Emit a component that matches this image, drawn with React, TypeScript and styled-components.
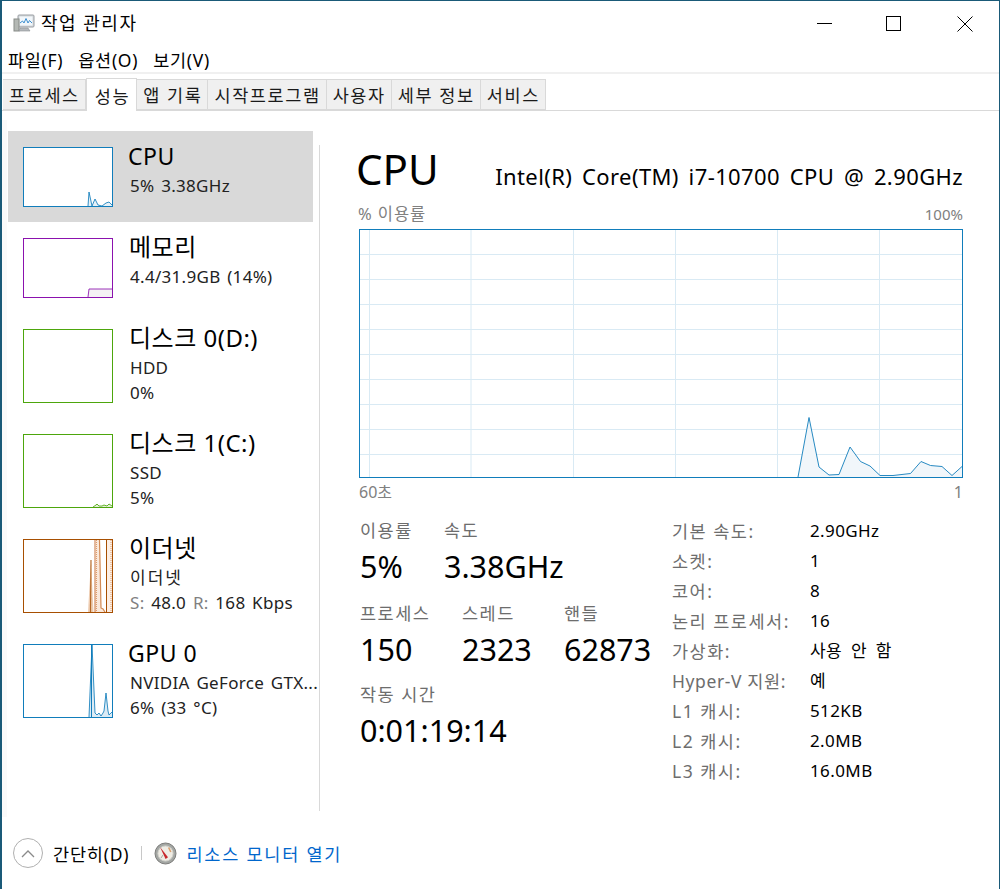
import React from 'react';
import styled, { createGlobalStyle } from 'styled-components';

const GlobalStyle = createGlobalStyle`
  html, body {
    margin: 0;
    padding: 0;
    background: #fff;
  }
  * {
    box-sizing: border-box;
  }
  body {
    font-family: "Noto Sans", "Noto Sans CJK KR", sans-serif;
    color: #000;
  }
`;

const Window = styled.div`
  width: 1000px;
  height: 889px;
  display: flex;
  flex-direction: column;
  border-top: 1px solid #1a5a78;
  border-left: 2px solid #1a5a78;
  border-right: 1px solid #1a5a78;
  overflow: hidden;
  background: #fff;
`;

const TitleBar = styled.div`
  height: 45px;
  flex: none;
  display: flex;
  align-items: center;
  padding-left: 11px;
`;

const TitleText = styled.div`
  margin-left: 6px;
  font-size: 18px;
  letter-spacing: 1.5px;
  line-height: 45px;
`;

const WindowButtons = styled.div`
  margin-left: auto;
  display: flex;
`;

const WindowButton = styled.div<{ $width: number }>`
  width: ${(p) => p.$width}px;
  height: 45px;
  display: flex;
  align-items: center;
  justify-content: center;
`;

const MenuBar = styled.div`
  height: 28px;
  flex: none;
  display: flex;
  gap: 15px;
  padding: 3px 0 0 6px;
  border-bottom: 2px solid #f0f0f0;
  align-items: center;
`;

const MenuItem = styled.div`
  font-size: 17.5px;
  line-height: 23px;
  letter-spacing: 0.7px;
`;

const TabBar = styled.div`
  height: 37px;
  flex: none;
  display: flex;
  align-items: flex-end;
  padding-left: 1px;
  border-bottom: 1px solid #d9d9d9;
`;

const Tab = styled.div<{ $active?: boolean }>`
  height: ${(p) => (p.$active ? '33px' : '31px')};
  margin-bottom: ${(p) => (p.$active ? '-1px' : '0')};
  padding: ${(p) => (p.$active ? '0 6px 0 8px' : '0 5px 0 6px')};
  display: flex;
  align-items: center;
  font-size: 17.5px;
  letter-spacing: 1.6px;
  white-space: nowrap;
  color: #1a1a1a;
  background: ${(p) => (p.$active ? '#fff' : '#f0f0f0')};
  border: 1px solid #d9d9d9;
  border-bottom: ${(p) => (p.$active ? 'none' : '1px solid #d9d9d9')};
  border-left: ${(p) => (p.$active ? '1px solid #d9d9d9' : 'none')};
`;

const Main = styled.div`
  flex: 1;
  display: flex;
  min-height: 0;
  padding-top: 9px;
`;

const Sidebar = styled.div`
  width: 317px;
  flex: none;
  padding-top: 11px;
  border-left: 5px solid #fafafa;
  padding-left: 1px;
  display: flex;
  flex-direction: column;
`;

const SideItem = styled.div<{ $selected?: boolean; $height: number }>`
  height: ${(p) => p.$height}px;
  flex: none;
  padding: 16px 0 0 15px;
  display: flex;
  gap: 16px;
  background: ${(p) => (p.$selected ? '#d9d9d9' : 'transparent')};
  width: 305px;
`;

const Thumb = styled.div<{ $color: string; $height: number }>`
  width: 90px;
  height: ${(p) => p.$height}px;
  flex: none;
  border: 1px solid ${(p) => p.$color};
  background: #fff;
  svg {
    display: block;
  }
`;

const ItemText = styled.div`
  display: flex;
  flex-direction: column;
  white-space: nowrap;
`;

const ItemTitle = styled.div<{ $latin?: boolean }>`
  font-size: ${(p) => (p.$latin ? '23px' : '24px')};
  line-height: 30px;
  margin: -6px 0 2px ${(p) => (p.$latin ? '-1px' : '0')};
  letter-spacing: ${(p) => (p.$latin ? '0.5px' : '0.5px')};
`;

const ItemLine = styled.div<{ $ko?: boolean }>`
  font-size: 17px;
  line-height: 25px;
  letter-spacing: ${(p) => (p.$ko ? '2px' : '0.3px')};
  word-spacing: 2px;
  margin-left: 1px;
  color: #222;
`;

const Muted = styled.span`
  color: #808080;
`;

const Divider = styled.div`
  width: 1px;
  flex: none;
  background: #d9d9d9;
  margin-top: 25px;
  height: 666px;
`;

const Content = styled.div`
  flex: 1;
  padding: 11px 36px 0 37px;
  display: flex;
  flex-direction: column;
`;

const Heading = styled.div`
  display: flex;
  align-items: baseline;
  justify-content: space-between;
  height: 61px;
`;

const BigTitle = styled.div`
  font-size: 42px;
  line-height: 56px;
  margin: 10px 0 0 -1px;
`;

const CpuName = styled.div`
  font-size: 22px;
  letter-spacing: 0.4px;
  word-spacing: 3.6px;
`;

const ChartCaption = styled.div`
  display: flex;
  justify-content: space-between;
  color: #808080;
  font-size: 15px;
  line-height: 22px;
  height: 26px;
  margin: 11px 0 0 0;
`;

const CaptionKo = styled.span`
  font-size: 16.5px;
  letter-spacing: 0.9px;
  margin-left: 1px;
`;

const ChartBox = styled.div`
  width: 604px;
  height: 249px;
  flex: none;
  margin-left: 2px;
  border: 1px solid #117dbb;
  svg {
    display: block;
  }
`;

const ChartFooter = styled.div`
  display: flex;
  justify-content: space-between;
  color: #808080;
  font-size: 16px;
  line-height: 22px;
  margin: 3px 0 0 2px;
  width: 604px;
`;

const Stats = styled.div`
  display: flex;
  margin: 15px 0 0 3px;
`;

const LeftStats = styled.div`
  width: 312px;
  flex: none;
  display: flex;
  flex-direction: column;
`;

const StatRow = styled.div<{ $bottom: number }>`
  display: flex;
  margin-bottom: ${(p) => p.$bottom}px;
`;

const Stat = styled.div<{ $width: number }>`
  width: ${(p) => p.$width}px;
  flex: none;
  white-space: nowrap;
`;

const StatLabel = styled.div`
  font-size: 17.5px;
  letter-spacing: 1.5px;
  line-height: 24px;
  color: #6d6d6d;
`;

const StatValue = styled.div`
  font-size: 30.5px;
  line-height: 42px;
  margin-top: 3px;
`;

const Specs = styled.div`
  display: grid;
  grid-template-columns: 138px 1fr;
  grid-auto-rows: 30px;
  margin-top: -2px;
  line-height: 30px;
  white-space: nowrap;
`;

const SpecLabel = styled.div<{ $latin?: boolean }>`
  color: #6d6d6d;
  font-size: 17.5px;
  letter-spacing: ${(p) => (p.$latin ? '0.6px' : '1.5px')};
`;

const SpecValue = styled.div`
  font-size: 17px;
  letter-spacing: 0.4px;
  word-spacing: 4px;
`;

const Footer = styled.div`
  height: 72px;
  flex: none;
  display: flex;
  align-items: center;
  padding: 0 0 0 11px;
`;

const CollapseButton = styled.div`
  width: 30px;
  height: 30px;
  border-radius: 50%;
  border: 1px solid #b0b0b0;
  display: flex;
  align-items: center;
  justify-content: center;
`;

const FooterLabel = styled.div`
  margin-left: 10px;
  font-size: 17.5px;
  letter-spacing: 0.8px;
`;

const FooterSep = styled.div`
  width: 1px;
  height: 14px;
  background: #c8c8c8;
  margin: 0 12px;
`;

const MonitorLink = styled.a`
  margin-left: 9px;
  font-size: 17.5px;
  letter-spacing: 1.8px;
  color: #0066cc;
`;

const TaskIcon = () => (
  <svg width="22" height="20" viewBox="0 0 22 20">
    <rect x="5" y="1" width="16" height="12" rx="1" fill="#d5d8db" stroke="#9a9fa4" />
    <rect x="6.5" y="2.5" width="13" height="9" fill="#f2f7fb" />
    <path d="M7 9 L9.5 7 L11 9 L13 4.5 L15 9 L16.5 6.5 L19 9" fill="none" stroke="#3c8fd0" strokeWidth="1" />
    <rect x="1" y="5" width="5" height="12" fill="#b4b8b4" stroke="#888c88" />
    <path d="M6 17 H17 L15 14 H7 Z" fill="#b5b9bd" stroke="#8a8e92" strokeWidth="0.6" />
  </svg>
);

const MonitorIcon = () => (
  <svg width="23" height="23" viewBox="0 0 23 23">
    <circle cx="11.5" cy="11.5" r="10.5" fill="#a3a6a3" stroke="#7c7c7a" />
    <circle cx="11.5" cy="11.5" r="7.6" fill="#efece4" stroke="#d2d2cc" />
    <path d="M6 5 L14 15.2 L11.6 17 Z" fill="#c8262a" />
    <path d="M14.6 5.5 L16.8 10" stroke="#d9a070" strokeWidth="1.6" />
    <path d="M7 16 L9 13" stroke="#a8a8a0" strokeWidth="1" />
  </svg>
);

// small history graph inside a sidebar thumbnail
const Spark = ({
  w,
  h,
  color,
  fill,
  d,
  children,
}: {
  w: number;
  h: number;
  color: string;
  fill: string;
  d: string;
  children?: React.ReactNode;
}) => (
  <svg width={w} height={h} viewBox={`0 0 ${w} ${h}`}>
    <path d={`${d} L${w} ${h} Z`} fill={fill} stroke="none" />
    <path d={d} fill="none" stroke={color} strokeWidth="1" opacity="0.85" />
    {children}
  </svg>
);

const EtherSpark = () => (
  <svg width="88" height="72" viewBox="0 0 88 72">
    <path d="M64 72 L67 20 L69.5 72 Z" fill="#eecdb2" />
    <path d="M67 20 L66.5 72" stroke="#a74f01" strokeWidth="1.2" opacity="0.8" />
    <path d="M71 72 L72 0 L76 0 L77 68 L79 68 L81 72 Z" fill="#fae9dc" />
    <path d="M83 72 L83 0 L88 0 L88 72 Z" fill="#fcefe5" />
    <path d="M71 0 V72" stroke="#c9723a" strokeWidth="1" />
    <path d="M72.5 0 V72 M87 0 V72" stroke="#dc9c6c" strokeWidth="1" strokeDasharray="1 1" />
    <path d="M75.5 0 L77 68 L79 69 L81 72" fill="none" stroke="#d28a54" strokeWidth="1.2" />
    <path d="M82.5 0 V72" stroke="#a74f01" strokeWidth="1" />
  </svg>
);

const mainPoints: [number, number][] = [
  [438, 247], [449, 187.5], [459, 237], [469, 245], [479, 244.5], [490, 217], [500.5, 231.5], [510, 236],
  [520, 245.5], [533, 245.5], [550.5, 243.5], [561, 231.5], [570.5, 235.5], [582, 236.5], [592, 245.5], [602, 236.5],
];

const MainChart = () => {
  const line = mainPoints.map(([x, y], i) => `${i ? 'L' : 'M'}${x} ${y}`).join(' ');
  const horizontal = Array.from({ length: 9 }, (_, i) => 24.5 + i * 25);
  const vertical = [9.5, 111, 213.5, 315.5, 417.5, 519.5];
  return (
    <svg width="602" height="247" viewBox="0 0 602 247">
      {horizontal.map((y) => (
        <line key={y} x1="0" x2="602" y1={y} y2={y} stroke="#d9eaf4" strokeWidth="1" />
      ))}
      {vertical.map((x) => (
        <line key={x} x1={x} x2={x} y1="0" y2="247" stroke="#d9eaf4" strokeWidth="1" />
      ))}
      <path d={`${line} L602 247 L438 247 Z`} fill="#f1f6fa" />
      <path d={line} fill="none" stroke="#117dbb" strokeWidth="1" opacity="0.9" />
    </svg>
  );
};

const specs = [
  ['기본 속도:', '2.90GHz'],
  ['소켓:', '1'],
  ['코어:', '8'],
  ['논리 프로세서:', '16'],
  ['가상화:', '사용 안 함'],
  ['Hyper-V 지원:', '예'],
  ['L1 캐시:', '512KB'],
  ['L2 캐시:', '2.0MB'],
  ['L3 캐시:', '16.0MB'],
];

const tabs = ['프로세스', '성능', '앱 기록', '시작프로그램', '사용자', '세부 정보', '서비스'];

const App = () => {
  return (
    <Window>
      <GlobalStyle />
      <TitleBar>
        <TaskIcon />
        <TitleText>작업 관리자</TitleText>
        <WindowButtons>
          <WindowButton $width={66}>
            <svg width="15" height="15" viewBox="0 0 15 15">
              <line x1="0" x2="15" y1="7.5" y2="7.5" stroke="#000" />
            </svg>
          </WindowButton>
          <WindowButton $width={73}>
            <svg width="15" height="15" viewBox="0 0 15 15">
              <rect x="0.5" y="0.5" width="14" height="14" fill="none" stroke="#000" />
            </svg>
          </WindowButton>
          <WindowButton $width={69}>
            <svg width="16" height="16" viewBox="0 0 16 16">
              <path d="M0.5 0.5 L15.5 15.5 M15.5 0.5 L0.5 15.5" stroke="#000" strokeWidth="1" />
            </svg>
          </WindowButton>
        </WindowButtons>
      </TitleBar>
      <MenuBar>
        <MenuItem>파일(F)</MenuItem>
        <MenuItem>옵션(O)</MenuItem>
        <MenuItem>보기(V)</MenuItem>
      </MenuBar>
      <TabBar>
        {tabs.map((t) => (
          <Tab key={t} $active={t === '성능'}>
            {t}
          </Tab>
        ))}
      </TabBar>
      <Main>
        <Sidebar>
          <SideItem $selected $height={91}>
            <Thumb $color="#117dbb" $height={60}>
              <Spark w={88} h={58} color="#117dbb" fill="#e6f1f8" d="M64 58 L65 44 L68 58 L71 51 L74 57 L78 58 L82 55 L85 54 L88 57" />
            </Thumb>
            <ItemText>
              <ItemTitle $latin>CPU</ItemTitle>
              <ItemLine>5% 3.38GHz</ItemLine>
            </ItemText>
          </SideItem>
          <SideItem $height={91}>
            <Thumb $color="#8b12ae" $height={60}>
              <Spark w={88} h={58} color="#8b12ae" fill="#f4f2f4" d="M64 58 L65 50 L88 50" />
            </Thumb>
            <ItemText>
              <ItemTitle>메모리</ItemTitle>
              <ItemLine>4.4/31.9GB (14%)</ItemLine>
            </ItemText>
          </SideItem>
          <SideItem $height={105}>
            <Thumb $color="#4da60c" $height={74} />
            <ItemText>
              <ItemTitle>디스크 0(D:)</ItemTitle>
              <ItemLine>HDD</ItemLine>
              <ItemLine>0%</ItemLine>
            </ItemText>
          </SideItem>
          <SideItem $height={105}>
            <Thumb $color="#4da60c" $height={74}>
              <Spark w={88} h={72} color="#4da60c" fill="#e4f0da" d="M69 72 L72 70 L73 69 L75 71 L78 71 L80 70 L83 71 L85 69 L88 71" />
            </Thumb>
            <ItemText>
              <ItemTitle>디스크 1(C:)</ItemTitle>
              <ItemLine>SSD</ItemLine>
              <ItemLine>5%</ItemLine>
            </ItemText>
          </SideItem>
          <SideItem $height={105}>
            <Thumb $color="#a74f01" $height={74}>
              <EtherSpark />
            </Thumb>
            <ItemText>
              <ItemTitle>이더넷</ItemTitle>
              <ItemLine $ko>이더넷</ItemLine>
              <ItemLine>
                <Muted>S:</Muted> 48.0 <Muted>R:</Muted> 168 Kbps
              </ItemLine>
            </ItemText>
          </SideItem>
          <SideItem $height={105}>
            <Thumb $color="#117dbb" $height={74}>
              <Spark w={88} h={72} color="#117dbb" fill="#dcebf5" d="M65 72 L68 0 L71 68 L73 70 L75 68 L77 71 L79 68 L80 66 L82 48 L84 66 L85 70 L88 67">
                <path d="M67.5 0 V72" stroke="#117dbb" strokeWidth="1" />
              </Spark>
            </Thumb>
            <ItemText>
              <ItemTitle $latin>GPU 0</ItemTitle>
              <ItemLine>NVIDIA GeForce GTX...</ItemLine>
              <ItemLine>6% (33 °C)</ItemLine>
            </ItemText>
          </SideItem>
        </Sidebar>
        <Divider />
        <Content>
          <Heading>
            <BigTitle>CPU</BigTitle>
            <CpuName>Intel(R) Core(TM) i7-10700 CPU @ 2.90GHz</CpuName>
          </Heading>
          <ChartCaption>
            <CaptionKo>% 이용률</CaptionKo>
            <span>100%</span>
          </ChartCaption>
          <ChartBox>
            <MainChart />
          </ChartBox>
          <ChartFooter>
            <span>60초</span>
            <span>1</span>
          </ChartFooter>
          <Stats>
            <LeftStats>
              <StatRow $bottom={14}>
                <Stat $width={84}>
                  <StatLabel>이용률</StatLabel>
                  <StatValue>5%</StatValue>
                </Stat>
                <Stat $width={200}>
                  <StatLabel>속도</StatLabel>
                  <StatValue>3.38GHz</StatValue>
                </Stat>
              </StatRow>
              <StatRow $bottom={12}>
                <Stat $width={102}>
                  <StatLabel>프로세스</StatLabel>
                  <StatValue>150</StatValue>
                </Stat>
                <Stat $width={102}>
                  <StatLabel>스레드</StatLabel>
                  <StatValue>2323</StatValue>
                </Stat>
                <Stat $width={100}>
                  <StatLabel>핸들</StatLabel>
                  <StatValue>62873</StatValue>
                </Stat>
              </StatRow>
              <StatRow $bottom={0}>
                <Stat $width={200}>
                  <StatLabel>작동 시간</StatLabel>
                  <StatValue>0:01:19:14</StatValue>
                </Stat>
              </StatRow>
            </LeftStats>
            <Specs>
              {specs.map(([label, value]) => (
                <React.Fragment key={label}>
                  <SpecLabel $latin={label.startsWith('Hyper')}>{label}</SpecLabel>
                  <SpecValue>{value}</SpecValue>
                </React.Fragment>
              ))}
            </Specs>
          </Stats>
        </Content>
      </Main>
      <Footer>
        <CollapseButton>
          <svg width="14" height="9" viewBox="0 0 14 9">
            <path d="M1 8 L7 2 L13 8" fill="none" stroke="#8a8a8a" strokeWidth="1.3" />
          </svg>
        </CollapseButton>
        <FooterLabel>간단히(D)</FooterLabel>
        <FooterSep />
        <MonitorIcon />
        <MonitorLink>리소스 모니터 열기</MonitorLink>
      </Footer>
    </Window>
  );
};

export default App;
